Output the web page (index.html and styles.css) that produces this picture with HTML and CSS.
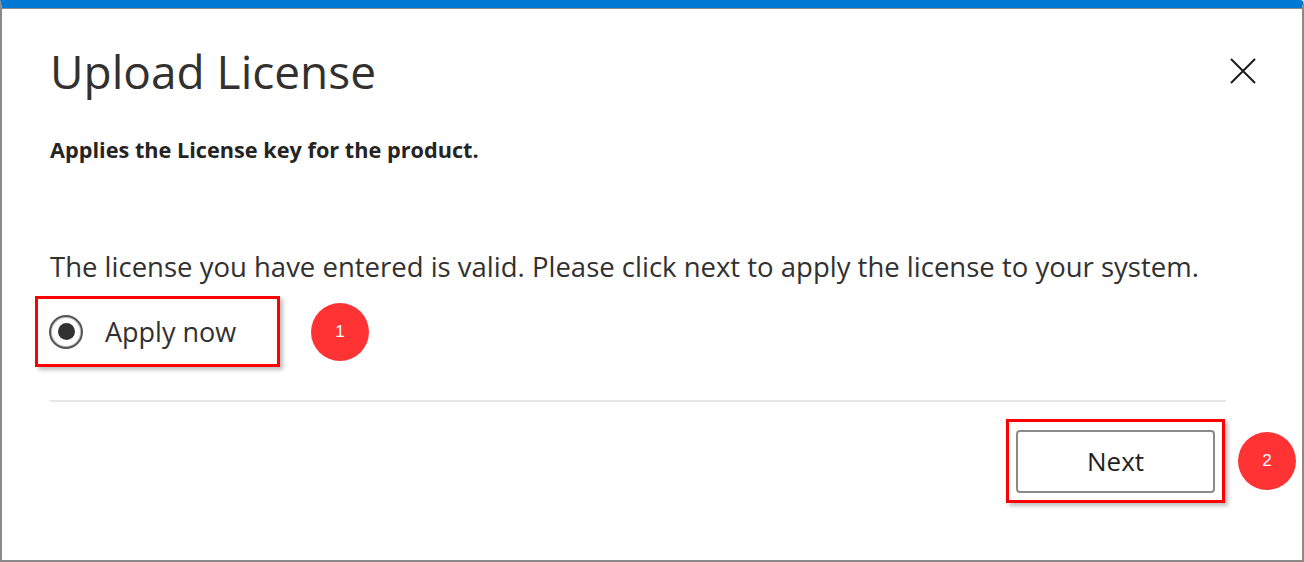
FILE: index.html
```html
<!DOCTYPE html>
<html lang="en">
<head>
    <meta charset="UTF-8">
    <meta name="viewport" content="width=device-width, initial-scale=1.0">
    <title>Upload License</title>
    <link rel="stylesheet" href="styles.css">
</head>
<body>
    <div class="window">
        <div class="header">
            <h1>Upload License</h1>
            <button class="close" aria-label="Close">
                <svg width="26" height="26" viewBox="0 0 26 26">
                    <path d="M1 1 L25 25 M25 1 L1 25" stroke="#1b1b1b" stroke-width="2" fill="none"/>
                </svg>
            </button>
        </div>

        <p class="subtitle">Applies the License key for the product.</p>

        <p class="message">The license you have entered is valid. Please click next to apply the license to your system.</p>

        <div class="option-row">
            <div class="highlight radio-box">
                <span class="radio"><span class="dot"></span></span>
                <span class="radio-label">Apply now</span>
            </div>
            <span class="badge">1</span>
        </div>

        <hr class="divider">

        <div class="footer">
            <div class="highlight next-box">
                <button class="next">Next</button>
            </div>
            <span class="badge">2</span>
        </div>
    </div>
</body>
</html>
```

FILE: styles.css
```css
html, body {
    margin: 0;
    padding: 0;
    background: #ffffff;
}

body {
    font-family: "Open Sans", "Noto Sans", sans-serif;
    color: #323130;
}

.window {
    box-sizing: border-box;
    width: 1304px;
    height: 562px;
    border-top: 8px solid #0078d4;
    border-left: 2px solid #8a8a8a;
    border-right: 2px solid #8a8a8a;
    border-bottom: 2px solid #8a8a8a;
    border-top-right-radius: 4px;
    padding: 0 76px 0 48px;
    box-shadow: inset 0 1px 0 #8a8a8a;
}

.header {
    display: flex;
    justify-content: space-between;
    align-items: center;
    padding-top: 35px;
}

h1 {
    margin: 0;
    font-size: 46px;
    font-weight: 400;
    line-height: 56px;
    color: #323130;
}

.close {
    background: none;
    border: none;
    padding: 0;
    margin-right: -30px;
    width: 26px;
    height: 26px;
    cursor: pointer;
}

.subtitle {
    margin: 38px 0 0;
    font-size: 21.7px;
    font-weight: 700;
    line-height: 26px;
    color: #252423;
}

.message {
    margin: 87px 0 0;
    font-size: 27.5px;
    line-height: 34px;
    color: #323130;
}

.option-row {
    display: flex;
    align-items: center;
    margin-top: 12px;
    margin-left: -15px;
}

.highlight {
    border: 3px solid #ff0000;
    box-shadow: 3px 3px 4px rgba(0, 0, 0, 0.25);
}

.radio-box {
    box-sizing: border-box;
    width: 245px;
    height: 71px;
    display: flex;
    align-items: center;
    padding-left: 11px;
    gap: 22px;
}

.radio {
    box-sizing: border-box;
    width: 34px;
    height: 34px;
    border-radius: 50%;
    border: 2px solid #555;
    box-shadow: inset 0 0 0 1px #bbb;
    display: flex;
    align-items: center;
    justify-content: center;
}

.dot {
    width: 17px;
    height: 17px;
    border-radius: 50%;
    background: #323232;
}

.radio-label {
    font-size: 27px;
    color: #323130;
}

.badge {
    width: 58px;
    height: 58px;
    border-radius: 50%;
    background: #ff3333;
    color: #ffffff;
    font-family: "Liberation Sans", Arial, sans-serif;
    font-size: 17px;
    display: flex;
    align-items: center;
    justify-content: center;
    margin-left: 31px;
}

.divider {
    border: none;
    border-top: 2px solid #e6e6e6;
    margin: 33px 0 0;
}

.footer {
    display: flex;
    justify-content: flex-end;
    align-items: center;
    margin-top: 17px;
    margin-right: -70px;
}

.next-box {
    box-sizing: border-box;
    width: 219px;
    height: 84px;
    display: flex;
    align-items: center;
    justify-content: center;
}

.next {
    box-sizing: border-box;
    width: 199px;
    height: 63px;
    border: 2px solid #8a8a8a;
    border-radius: 4px;
    background: #ffffff;
    font-family: "Open Sans", "Noto Sans", sans-serif;
    font-size: 26px;
    color: #201f1e;
    cursor: pointer;
}

.footer .badge {
    margin-left: 13px;
}
```
